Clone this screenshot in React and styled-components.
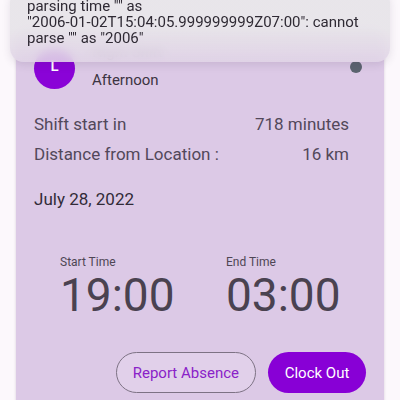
import React from 'react'
import styled, { createGlobalStyle } from 'styled-components'

const GlobalStyle = createGlobalStyle`
  html, body {
    margin: 0;
    padding: 0;
    background: #fcf8fc;
    font-family: Roboto, "Liberation Sans", sans-serif;
    overflow: hidden;
  }
`

const Page = styled.div`
  position: relative;
  width: 400px;
  height: 400px;
  overflow: hidden;
  padding: 28px 16px 0;
  box-sizing: border-box;
`

const Card = styled.div`
  background: #dcc9e6;
  border-radius: 12px;
  box-shadow: 0 1px 3px rgba(60, 30, 70, 0.18);
  padding: 20px 18px 30px 18px;
  min-height: 420px;
  box-sizing: border-box;
`

const Header = styled.div`
  display: flex;
  align-items: flex-start;
  gap: 17px;
`

const Avatar = styled.div`
  width: 41px;
  height: 41px;
  border-radius: 50%;
  background: #8a03d7;
  color: #fff;
  font-size: 15px;
  font-weight: 500;
  display: flex;
  align-items: center;
  justify-content: center;
  padding-bottom: 5px;
  box-sizing: border-box;
  flex-shrink: 0;
`

const HeaderText = styled.div`
  flex: 1;
  display: flex;
  flex-direction: column;
`

const Title = styled.div`
  font-size: 15px;
  line-height: 20px;
  color: #6a6070;
  margin-top: -6px;
`

const Subtitle = styled.div`
  font-size: 15px;
  line-height: 20px;
  color: #3c3442;
  margin-top: 8px;
`

const StatusDot = styled.div`
  width: 12px;
  height: 12px;
  border-radius: 50%;
  background: #5c6470;
  margin-top: 13px;
  margin-right: 4px;
`

const Info = styled.div`
  margin-top: 19px;
  padding-right: 17px;
`

const InfoRow = styled.div`
  display: flex;
  justify-content: space-between;
  font-size: 17px;
  line-height: 30px;
  color: #52485a;
`

const DateLine = styled.div`
  margin-top: 15px;
  font-size: 17px;
  line-height: 30px;
  color: #322b38;
`

const Times = styled.div`
  display: grid;
  grid-template-columns: 166px 166px;
  padding-left: 26px;
  margin-top: 40px;
`

const TimeLabel = styled.div`
  font-size: 12px;
  line-height: 16px;
  color: #4e4654;
`

const TimeValue = styled.div`
  font-size: 46px;
  line-height: 46px;
  margin-top: 2px;
  color: #4a4250;
`

const Actions = styled.div`
  display: flex;
  justify-content: flex-end;
  gap: 12px;
  margin-top: 34px;
`

const Button = styled.button`
  height: 41px;
  border-radius: 21px;
  font-family: Roboto, "Liberation Sans", sans-serif;
  font-size: 15px;
  padding: 0 16px;
  border: ${({ $primary }) => ($primary ? 'none' : '1px solid #7d7284')};
  background: ${({ $primary }) => ($primary ? '#8800d6' : '#e1d0ea')};
  color: ${({ $primary }) => ($primary ? '#ffffff' : '#8a22c8')};
  min-width: ${({ $primary }) => ($primary ? '98px' : '139px')};
`

const Toast = styled.div`
  position: absolute;
  top: -12px;
  left: 10px;
  right: 10px;
  padding: 10px 17px 16px;
  border-radius: 14px;
  background: linear-gradient(to bottom, rgba(231, 228, 233, 0.94) 55%, rgba(224, 212, 230, 0.88));
  backdrop-filter: blur(5px);
  box-shadow: 0 3px 8px rgba(60, 40, 70, 0.12);
  font-size: 15px;
  line-height: 16px;
  color: #2f2a34;
`

const ToastLine = styled.div`
  white-space: nowrap;
`

export default function App() {
  return (
    <Page>
      <GlobalStyle />
      <Card>
        <Header>
          <Avatar>L</Avatar>
          <HeaderText>
            <Title>Night Shift</Title>
            <Subtitle>Afternoon</Subtitle>
          </HeaderText>
          <StatusDot />
        </Header>
        <Info>
          <InfoRow>
            <span>Shift start in</span>
            <span>718 minutes</span>
          </InfoRow>
          <InfoRow>
            <span>Distance from Location :</span>
            <span>16 km</span>
          </InfoRow>
        </Info>
        <DateLine>July 28, 2022</DateLine>
        <Times>
          <div>
            <TimeLabel>Start Time</TimeLabel>
            <TimeValue>19:00</TimeValue>
          </div>
          <div>
            <TimeLabel>End Time</TimeLabel>
            <TimeValue>03:00</TimeValue>
          </div>
        </Times>
        <Actions>
          <Button>Report Absence</Button>
          <Button $primary>Clock Out</Button>
        </Actions>
      </Card>
      <Toast>
        <ToastLine>parsing time "" as</ToastLine>
        <ToastLine>"2006-01-02T15:04:05.999999999Z07:00": cannot</ToastLine>
        <ToastLine>parse "" as "2006"</ToastLine>
      </Toast>
    </Page>
  )
}
